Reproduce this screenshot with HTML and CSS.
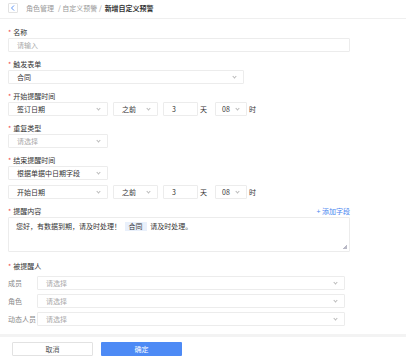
FILE: index.html
```html
<!DOCTYPE html>
<html lang="zh-CN">
<head>
    <meta charset="UTF-8">
    <meta name="viewport" content="width=device-width, initial-scale=1.0">
    <title>新增自定义预警</title>
    <link rel="stylesheet" href="styles.css">
</head>
<body>
    <div class="header">
        <div class="back">
            <svg width="6" height="6" viewBox="0 0 6 6"><path d="M4 0.5 L1.5 3 L4 5.5" fill="none" stroke="#4a86f0" stroke-width="0.9"/></svg>
        </div>
        <div class="crumbs">
            <span class="muted">角色管理</span>
            <span class="muted sep">/ 自定义预警 /</span>
            <span class="current">新增自定义预警</span>
        </div>
    </div>

    <div class="form">
        <div class="field">
            <div class="label"><i>*</i>名称</div>
            <div class="control full placeholder">请输入</div>
        </div>

        <div class="field">
            <div class="label"><i>*</i>触发表单</div>
            <div class="control select wide">合同<span class="arrow"></span></div>
        </div>

        <div class="field">
            <div class="label"><i>*</i>开始提醒时间</div>
            <div class="row">
                <div class="control select sm">签订日期<span class="arrow"></span></div>
                <div class="control select xs">之前<span class="arrow"></span></div>
                <div class="control num">3</div>
                <span class="unit">天</span>
                <div class="control select hour">08<span class="arrow"></span></div>
                <span class="unit">时</span>
            </div>
        </div>

        <div class="field">
            <div class="label"><i>*</i>重复类型</div>
            <div class="control select sm placeholder">请选择<span class="arrow"></span></div>
        </div>

        <div class="field">
            <div class="label"><i>*</i>结束提醒时间</div>
            <div class="control select sm">根据单据中日期字段<span class="arrow"></span></div>
            <div class="row second">
                <div class="control select sm">开始日期<span class="arrow"></span></div>
                <div class="control select xs">之前<span class="arrow"></span></div>
                <div class="control num">3</div>
                <span class="unit">天</span>
                <div class="control select hour">08<span class="arrow"></span></div>
                <span class="unit">时</span>
            </div>
        </div>

        <div class="field">
            <div class="label split">
                <span><i>*</i>提醒内容</span>
                <span class="add">+ 添加字段</span>
            </div>
            <div class="textarea">
                您好，有数据到期，请及时处理！ <span class="tag">合同</span> 请及时处理。
                <span class="grip"></span>
            </div>
        </div>

        <div class="field people">
            <div class="label"><i>*</i>被提醒人</div>
            <div class="person">
                <span class="pname">成员</span>
                <div class="control select grow placeholder">请选择<span class="arrow"></span></div>
            </div>
            <div class="person">
                <span class="pname">角色</span>
                <div class="control select grow placeholder">请选择<span class="arrow"></span></div>
            </div>
            <div class="person">
                <span class="pname">动态人员</span>
                <div class="control select grow placeholder">请选择<span class="arrow"></span></div>
            </div>
        </div>
    </div>

    <div class="footer">
        <button class="btn cancel">取消</button>
        <button class="btn ok">确定</button>
    </div>
</body>
</html>
```

FILE: styles.css
```css
* {
    margin: 0;
    padding: 0;
    box-sizing: border-box;
}

body {
    width: 406px;
    height: 363px;
    background: #fff;
    font-family: "Noto Sans CJK SC", "Noto Sans", sans-serif;
    font-size: 7px;
    color: #333;
    overflow: hidden;
}

.header {
    display: flex;
    align-items: center;
    gap: 8px;
    height: 19px;
    padding-left: 8px;
    border-bottom: 1px solid #efefef;
}

.back {
    display: flex;
    align-items: center;
    justify-content: center;
    width: 10px;
    height: 10px;
    margin-top: -2px;
    border: 1px solid #e2e2e2;
    border-radius: 1px;
}

.crumbs {
    display: flex;
    gap: 4px;
    line-height: 10px;
    margin-top: -2px;
}

.muted {
    color: #999;
}

.current {
    color: #333;
    font-weight: 700;
    margin-left: -1px;
}

.form {
    padding: 1px 8px 0;
}

.field {
    margin-top: 7px;
}

.label {
    line-height: 10px;
    height: 10px;
    margin-bottom: 1px;
    color: #333;
}

.label i {
    font-style: normal;
    color: #f04a4a;
    margin-right: 2px;
}

.label.split {
    display: flex;
    justify-content: space-between;
    width: 342px;
}

.add {
    color: #4a86f0;
}

.control {
    position: relative;
    height: 14px;
    line-height: 12px;
    padding: 0 8px;
    border: 1px solid #ececec;
    border-radius: 1px;
    background: #fff;
    white-space: nowrap;
}

.placeholder {
    color: #aaa;
}

.full {
    width: 342px;
}

.wide {
    width: 236px;
}

.sm {
    width: 100px;
}

.xs {
    width: 45px;
}

.num {
    width: 35px;
}

.hour {
    width: 32px;
    padding-left: 6px;
}

.select .arrow {
    position: absolute;
    right: 7px;
    top: 4px;
    width: 3px;
    height: 3px;
    border-right: 0.8px solid #bbb;
    border-bottom: 0.8px solid #bbb;
    transform: rotate(45deg);
}

.row {
    display: flex;
    align-items: center;
    gap: 5px;
}

.row.second {
    margin-top: 5px;
}

.unit {
    color: #333;
    margin: 0 3px 0 -3px;
}

.textarea {
    position: relative;
    width: 342px;
    height: 35px;
    padding: 2px 7px;
    line-height: 12px;
    border: 1px solid #ececec;
    border-radius: 1px;
}

.tag {
    display: inline-block;
    padding: 0 4px;
    margin: 0 2px;
    line-height: 9px;
    background: #e9f0fb;
    color: #333;
}

.grip {
    position: absolute;
    right: 2px;
    bottom: 2px;
    width: 4px;
    height: 4px;
    background: linear-gradient(135deg, transparent 50%, #b9b9c6 50%);
}

.people {
    margin-top: 9px;
}

.person {
    display: flex;
    align-items: center;
    margin-top: 4px;
}

.label + .person {
    margin-top: 5px;
}

.pname {
    width: 29px;
    color: #888;
}

.grow {
    width: 308px;
}

.footer {
    display: flex;
    gap: 8px;
    margin-top: 8px;
    padding: 5px 12px;
    border-top: 3px solid #f3f3f3;
}

.btn {
    width: 81px;
    height: 14px;
    font-family: inherit;
    font-size: 7px;
    border: none;
    border-radius: 1px;
}

.cancel {
    background: #fff;
    border: 1px solid #e2e2e2;
    color: #555;
}

.ok {
    background: #4d8af5;
    color: #fff;
}
```
